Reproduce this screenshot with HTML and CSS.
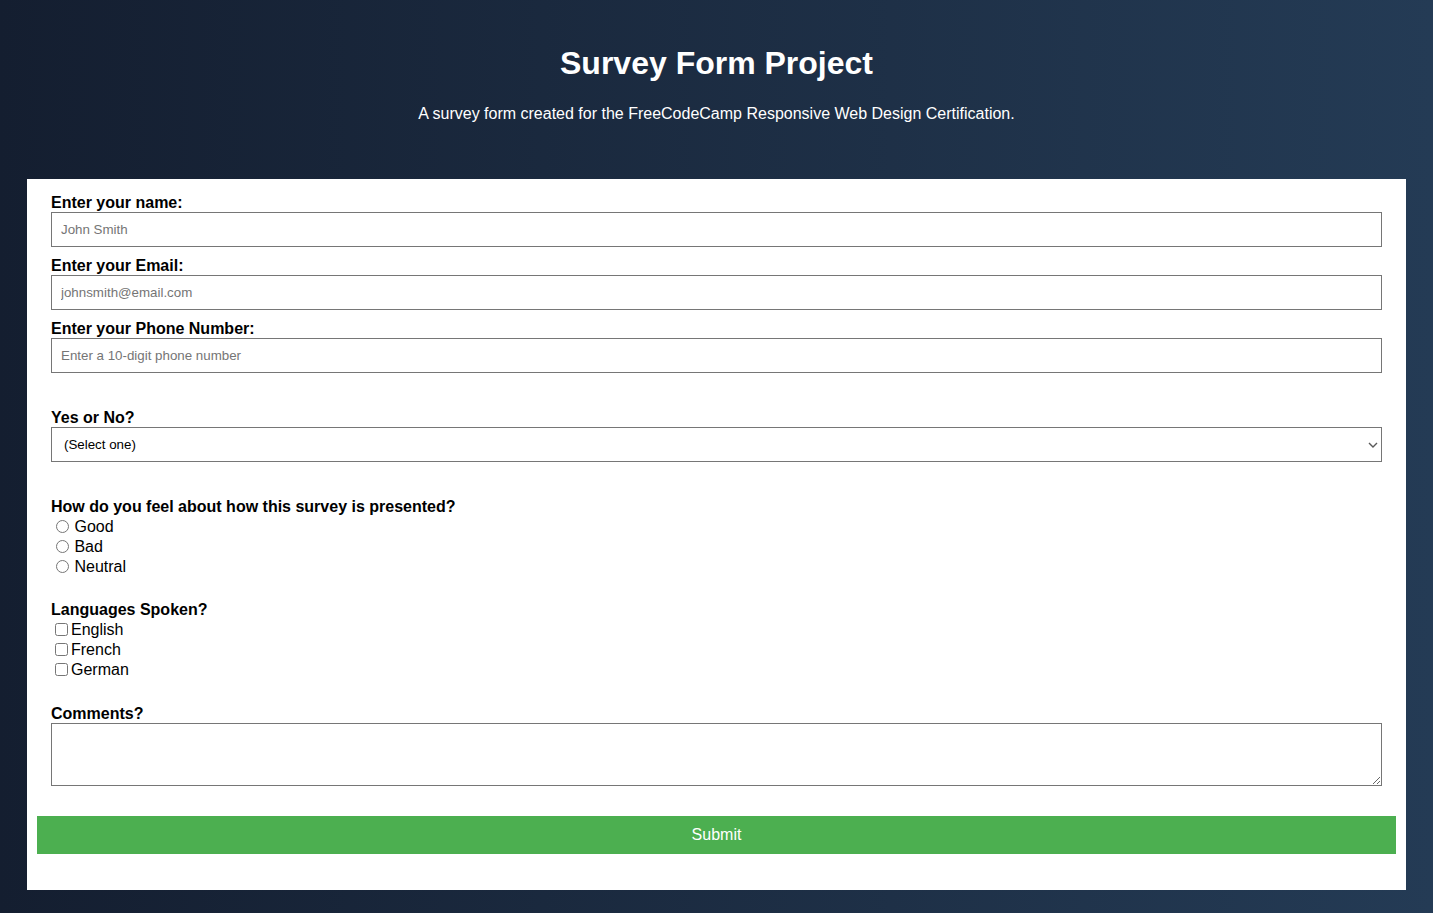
FILE: index.html
```html
<!DOCTYPE html>
<html lang="en">
<head>
<meta charset="utf-8">
<title>Survey Form Project</title>
<link rel="stylesheet" href="styles.css">
</head>
<body>
<header class="header">
  <h1 id="title" class="title">Survey Form Project</h1>
  <p id="description" class="description">A survey form created for the FreeCodeCamp Responsive Web Design Certification.</p>
</header>
<form id="survey-form" class="survey">
  <div class="group">
    <label class="label" for="name">Enter your name:</label>
    <input class="field" id="name" type="text" placeholder="John Smith">
  </div>
  <div class="group">
    <label class="label" for="email">Enter your Email:</label>
    <input class="field" id="email" type="email" placeholder="johnsmith@email.com">
  </div>
  <div class="group">
    <label class="label" for="number">Enter your Phone Number:</label>
    <input class="field" id="number" type="number" placeholder="Enter a 10-digit phone number">
  </div>
  <div class="group group-select">
    <label class="label" for="dropdown">Yes or No?</label>
    <select class="field select" id="dropdown">
      <option>(Select one)</option>
      <option>Yes</option>
      <option>No</option>
    </select>
  </div>
  <div class="group group-spaced">
    <p class="label label-list">How do you feel about how this survey is presented?</p>
    <label class="choice"><input class="radio" type="radio" name="feel" value="good"> Good</label>
    <label class="choice"><input class="radio" type="radio" name="feel" value="bad"> Bad</label>
    <label class="choice"><input class="radio" type="radio" name="feel" value="neutral"> Neutral</label>
  </div>
  <div class="group group-mid">
    <p class="label label-list">Languages Spoken?</p>
    <label class="choice"><input class="check" type="checkbox" value="english">English</label>
    <label class="choice"><input class="check" type="checkbox" value="french">French</label>
    <label class="choice"><input class="check" type="checkbox" value="german">German</label>
  </div>
  <div class="group group-comments">
    <label class="label" for="comments">Comments?</label>
    <textarea class="field textarea" id="comments"></textarea>
  </div>
  <button id="submit" class="submit" type="submit">Submit</button>
</form>
</body>
</html>
```
FILE: styles.css
```css
html {
  min-height: 100%;
  background: linear-gradient(to right, #141e30, #243b55);
}
body {
  margin: 0;
  font-family: "Liberation Sans", Arial, sans-serif;
  color: #000;
}
.header {
  padding-top: 45px;
  text-align: center;
  color: #fff;
}
.title {
  margin: 0;
  font-size: 32px;
  line-height: 37px;
  font-weight: bold;
}
.description {
  margin: 23px 0 0;
  font-size: 16px;
  line-height: 18px;
}
.survey {
  margin: 56px 27px 23px;
  background: #fff;
  padding: 15px 10px 36px;
}
.group {
  padding: 0 14px;
  margin-bottom: 10px;
}
.group-select {
  margin-top: 36px;
}
.group-spaced {
  margin-top: 36px;
}
.group-mid {
  margin-top: 24px;
}
.group-comments {
  margin-top: 25px;
}
.label {
  display: block;
  margin: 0;
  font-size: 16px;
  line-height: 18px;
  font-weight: bold;
}
.label-list {
  margin-bottom: 1px;
}
.field {
  display: block;
  box-sizing: border-box;
  width: 100%;
  height: 35px;
  margin: 0;
  padding: 0 9px;
  border: 1px solid #767676;
  border-radius: 0;
  font-family: "Liberation Sans", Arial, sans-serif;
  font-size: 13.33px;
  background: #fff;
}
.field::placeholder {
  color: #757575;
}
.select {
  -webkit-appearance: none;
  appearance: none;
  padding: 0 30px 0 12px;
  color: #000;
  background: #fff url("data:image/svg+xml,%3Csvg xmlns='http://www.w3.org/2000/svg' width='10' height='6' viewBox='0 0 10 6'%3E%3Cpath d='M1 1l4 4 4-4' fill='none' stroke='%23595959' stroke-width='1.4'/%3E%3C/svg%3E") no-repeat right 3px center;
}
.textarea {
  height: 63px;
  padding: 2px;
}
.choice {
  display: block;
  font-size: 16px;
  line-height: 20px;
  height: 20px;
}
.radio {
  margin: 3px 1px 0 5px;
  vertical-align: -1px;
}
.check {
  margin: 3px 3px 3px 4px;
  vertical-align: -1px;
}
.submit {
  display: block;
  width: 100%;
  height: 38px;
  margin-top: 30px;
  border: none;
  background: #4caf50;
  color: #fff;
  font-family: "Liberation Sans", Arial, sans-serif;
  font-size: 16px;
  cursor: pointer;
}
```
